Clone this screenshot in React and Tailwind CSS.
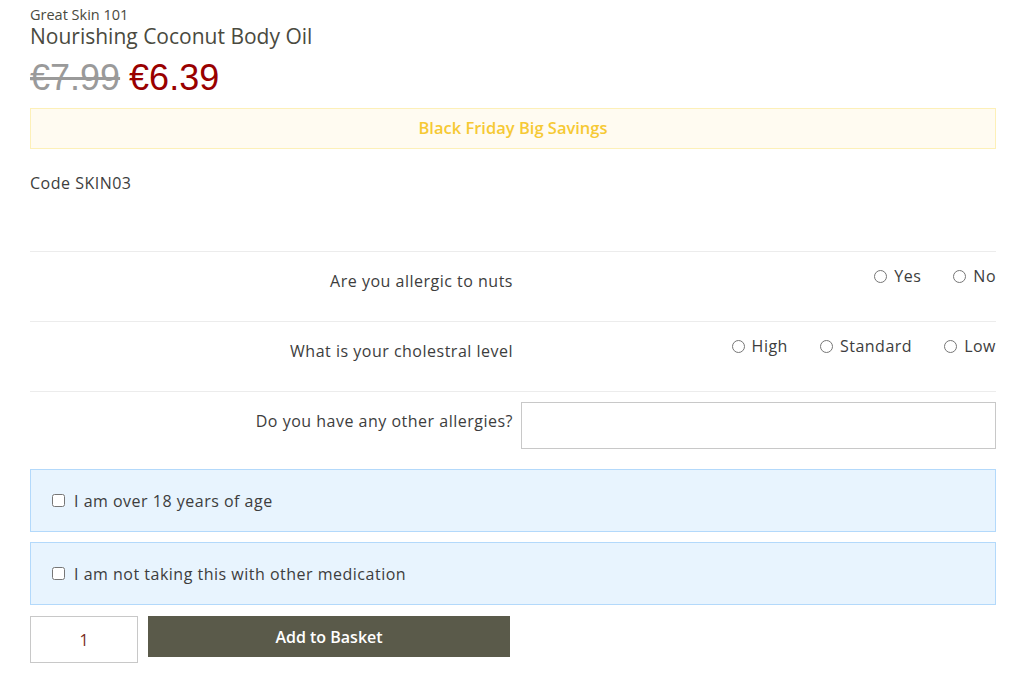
import React from "react";

const font = { fontFamily: "'Open Sans', 'Noto Sans', sans-serif" };

const body = "text-[16px] leading-[24px] tracking-[0.5px] text-[#3d3d3d]";

const Radio = ({ name, label }) => (
  <label className={`flex items-center gap-[7px] ${body}`}>
    <input type="radio" name={name} className="w-[13px] h-[13px] m-0" />
    {label}
  </label>
);

const QuestionRow = ({ label, children }) => (
  <div className="flex border-t border-[#ececec] h-[70px]">
    <div className={`w-[483px] text-right pt-[17px] ${body}`}>{label}</div>
    <div className="flex-1 pl-[8px]">{children}</div>
  </div>
);

const Agreement = ({ label }) => (
  <label className={`flex items-center gap-[9px] h-[63px] px-[21px] bg-[#e8f4fe] border border-[#b3d9fb] ${body}`}>
    <input type="checkbox" className="w-[13px] h-[13px] m-0" />
    {label}
  </label>
);

export default function App() {
  return (
    <div className="bg-white min-h-screen pl-[30px] pr-[25px] pt-[5px]" style={font}>
      <div className="text-[14.5px] text-[#4a4a40] leading-[20px]">Great Skin 101</div>
      <h1 className="text-[21px] text-[#4a4a40] leading-[22px]">Nourishing Coconut Body Oil</h1>
      <div className="flex items-baseline gap-[9px] mt-[11px] leading-[40px]" style={{ fontFamily: "'Liberation Sans', Arial, sans-serif" }}>
        <span className="text-[36px] text-[#9a9a9a] line-through">€7.99</span>
        <span className="text-[36px] text-[#990000]">€6.39</span>
      </div>
      <div className="mt-[10px] h-[41px] flex items-center justify-center bg-[#fffbf1] border border-[#fdf0b8] text-[16.5px] font-semibold text-[#f6c934]">
        Black Friday Big Savings
      </div>
      <div className={`mt-[22px] ${body}`}>Code SKIN03</div>

      <div className="mt-[56px]">
        <QuestionRow label="Are you allergic to nuts">
          <div className="flex justify-end gap-[32px] pt-[12px]">
            <Radio name="nuts" label="Yes" />
            <Radio name="nuts" label="No" />
          </div>
        </QuestionRow>
        <QuestionRow label="What is your cholestral level">
          <div className="flex justify-end gap-[32px] pt-[12px]">
            <Radio name="chol" label="High" />
            <Radio name="chol" label="Standard" />
            <Radio name="chol" label="Low" />
          </div>
        </QuestionRow>
        <div className="flex border-t border-[#ececec] pt-[10px]">
          <div className={`w-[483px] text-right pt-[7px] ${body}`}>Do you have any other allergies?</div>
          <div className="flex-1 pl-[8px]">
            <input type="text" className="w-full h-[47px] border border-[#c8c8c8] outline-none px-2" />
          </div>
        </div>
      </div>

      <div className="mt-[20px] flex flex-col gap-[10px]">
        <Agreement label="I am over 18 years of age" />
        <Agreement label="I am not taking this with other medication" />
      </div>

      <div className="flex gap-[10px] mt-[11px]">
        <input
          type="text"
          defaultValue="1"
          className="w-[108px] h-[47px] border border-[#c8c8c8] text-center text-[16px] text-[#7a2a1a] outline-none"
        />
        <button className="w-[362px] h-[41px] bg-[#5a5a4a] text-white text-[16px] font-semibold">
          Add to Basket
        </button>
      </div>
    </div>
  );
}
